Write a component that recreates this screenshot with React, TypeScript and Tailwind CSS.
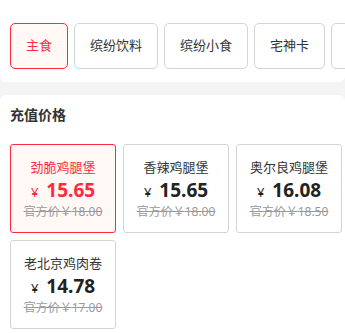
import React from "react";

const tabs = ["主食", "缤纷饮料", "缤纷小食", "宅神卡"];
const items = [
  { name: "劲脆鸡腿堡", price: "15.65", orig: "18.00", active: true },
  { name: "香辣鸡腿堡", price: "15.65", orig: "18.00" },
  { name: "奥尔良鸡腿堡", price: "16.08", orig: "18.50" },
  { name: "老北京鸡肉卷", price: "14.78", orig: "17.00" },
];

export default function App() {
  return (
    <div
      className="w-[345px] h-[333px] overflow-hidden bg-[#f4f4f4]"
      style={{ fontFamily: '"Noto Sans", "Noto Sans CJK SC", sans-serif' }}
    >
      <div className="bg-white h-[82px] rounded-b-[6px] pt-[23px] pl-[10px] overflow-hidden">
        <div className="flex gap-[6px] whitespace-nowrap">
          {tabs.map((t, i) => (
            <div
              key={t}
              className={
                "h-[46px] shrink-0 flex items-center justify-center px-[15px] rounded-[5px] border text-[13px] " +
                (i === 0
                  ? "border-[#ff2a40] bg-[#fff8f5] text-[#ff2a40]"
                  : "border-[#d4d4d4] bg-white text-[#333]")
              }
            >
              {t}
            </div>
          ))}
          <div className="h-[46px] w-[60px] shrink-0 rounded-[5px] border border-[#d4d4d4] bg-white" />
        </div>
      </div>
      <div className="bg-white mt-[13px] rounded-t-[6px] h-[300px] px-[10px]">
        <div className="pt-[10px] h-[49px] text-[14px] font-bold text-[#333] leading-[20px]">
          充值价格
        </div>
        <div className="grid grid-cols-3 gap-x-[7px] gap-y-[7px] w-[332px]">
          {items.map((it) => (
            <div
              key={it.name}
              className={
                "h-[89px] rounded-[3px] border flex flex-col items-center justify-center " +
                (it.active
                  ? "border-[#ff2a40] bg-[#fff8f5]"
                  : "border-[#d4d4d4] bg-white")
              }
            >
              <div
                className={
                  "text-[13px] leading-[18px] " +
                  (it.active ? "text-[#ff2a40]" : "text-[#333]")
                }
              >
                {it.name}
              </div>
              <div
                className={
                  "flex items-baseline mt-[2px] leading-[24px] " +
                  (it.active ? "text-[#ff2a40]" : "text-[#222]")
                }
              >
                <span className="text-[13px] mr-[8px]">¥</span>
                <span className="text-[19px] font-bold">{it.price}</span>
              </div>
              <div className="text-[12px] leading-[16px] text-[#999] line-through">
                官方价￥{it.orig}
              </div>
            </div>
          ))}
        </div>
      </div>
    </div>
  );
}
